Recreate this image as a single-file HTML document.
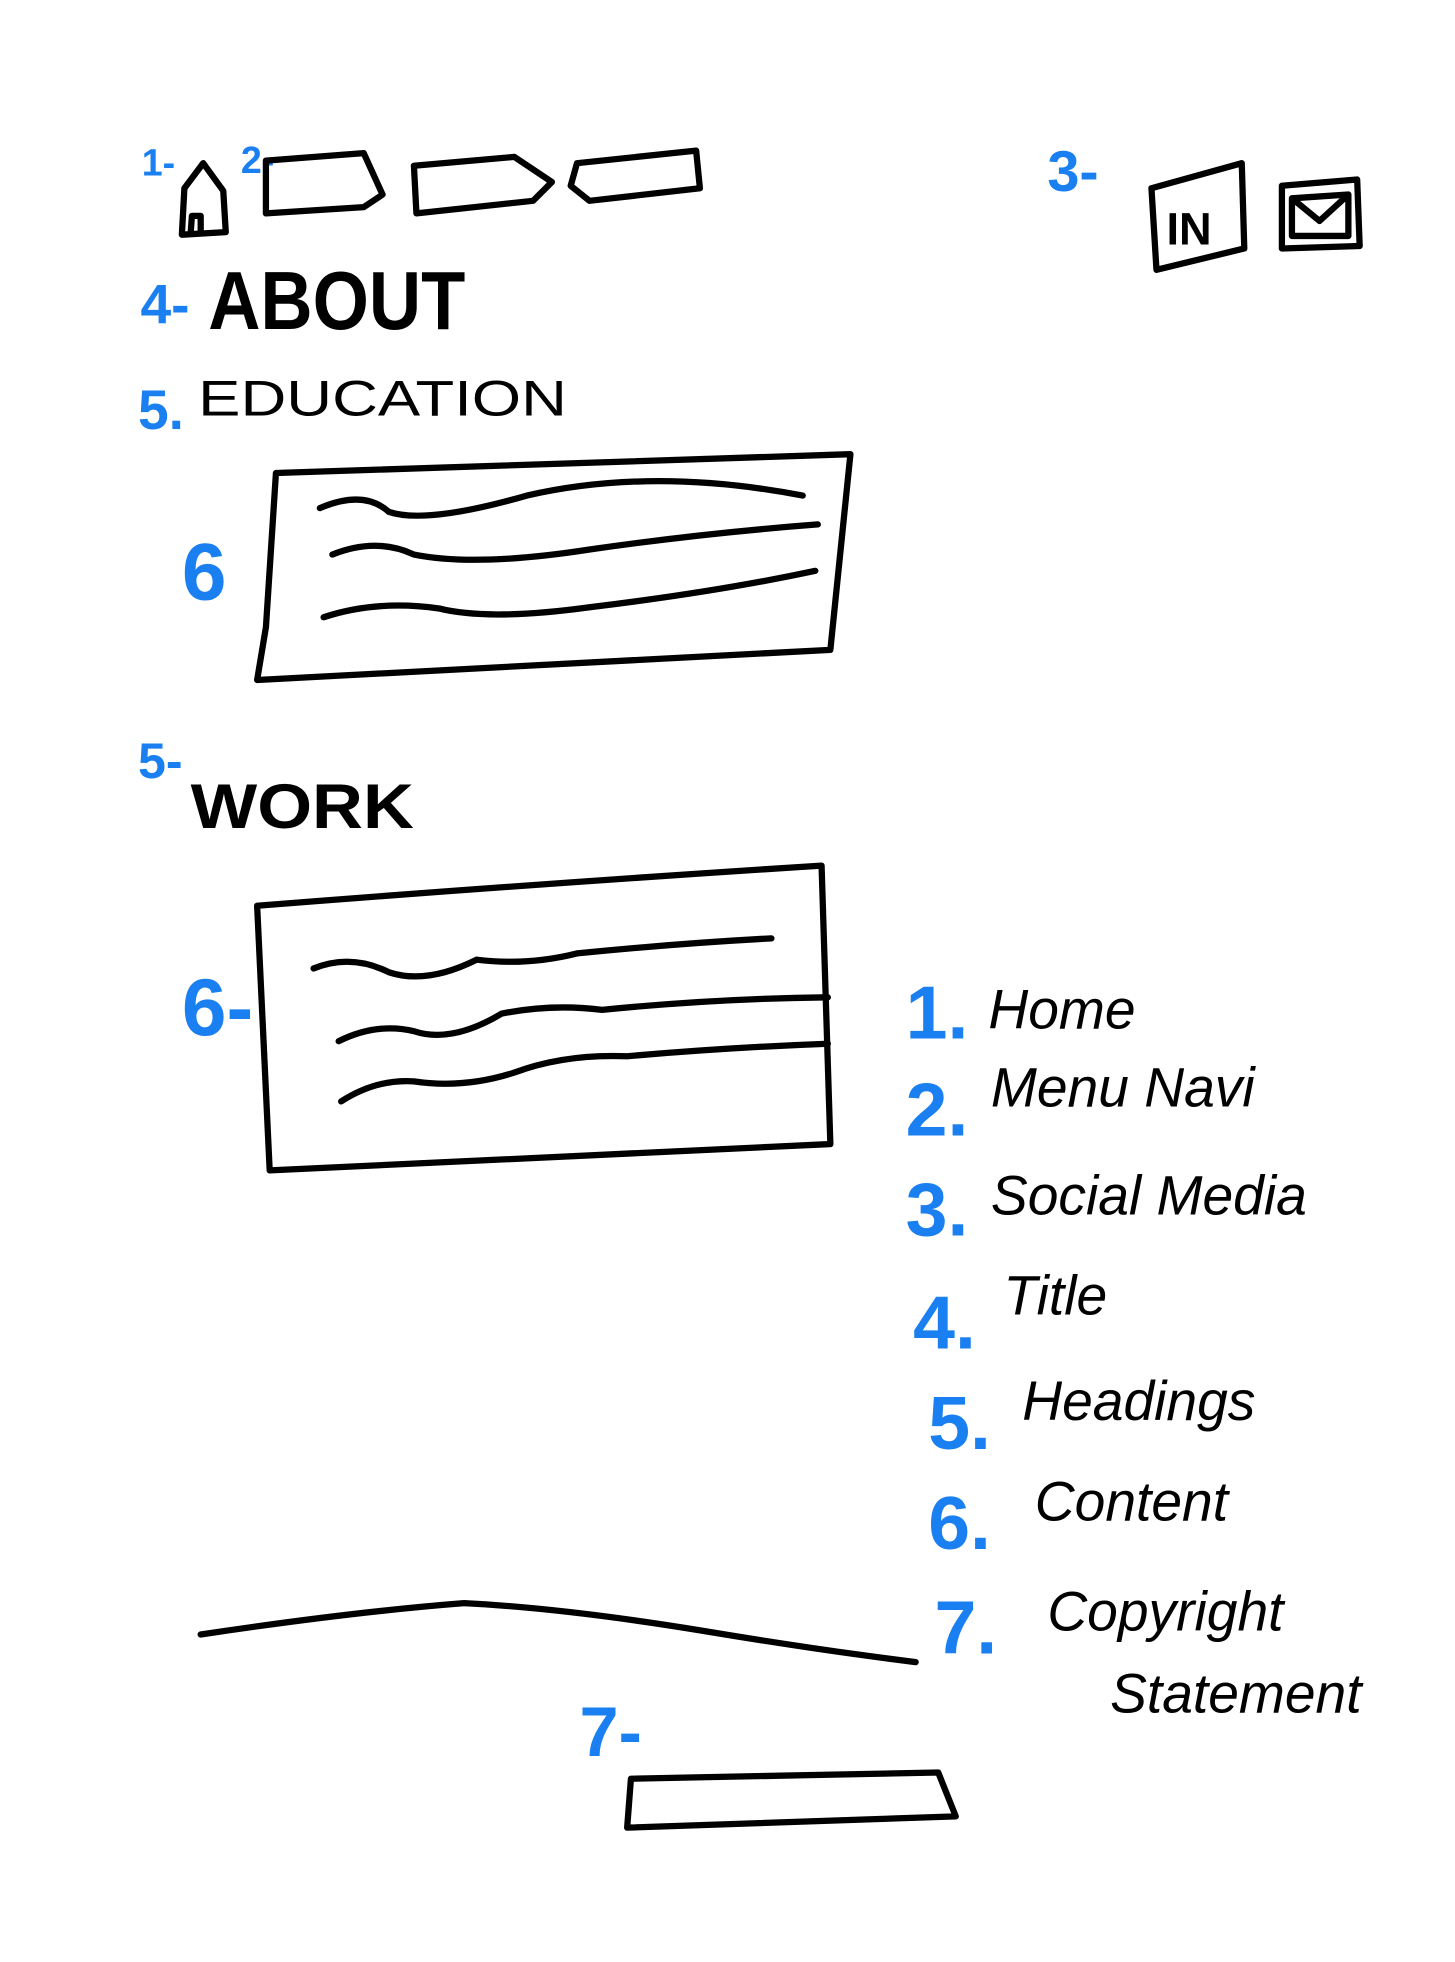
<!DOCTYPE html>
<html><head><meta charset="utf-8"><style>
html,body{margin:0;padding:0;background:#fff;}
svg{display:block}
.b{fill:#1a7ff0;font-family:"Liberation Sans",sans-serif;font-weight:bold}
.k{fill:#000;font-family:"Liberation Sans",sans-serif}
.s{fill:none;stroke:#000;stroke-width:5;stroke-linecap:round;stroke-linejoin:round}
</style></head><body>
<svg width="1455" height="1962" viewBox="0 0 1160 1564" xmlns="http://www.w3.org/2000/svg">
<rect width="1160" height="1564" fill="#fff"/>
<text class="b" x="113" y="140" font-size="30">1-</text>
<path class="s" d="M145 187 L147 150 L162 130 L178 152 L180 185 Z M152 186 L153 172 L160 172 L160 186"/>
<text class="b" x="192" y="138" font-size="30">2-</text>
<path class="s" d="M212 128 L290 122 L305 155 L290 165 L212 170 Z"/>
<path class="s" d="M330 132 L410 125 L440 145 L425 160 L332 170 Z"/>
<path class="s" d="M460 130 L555 120 L558 150 L470 160 L455 148 Z"/>
<text class="b" x="835" y="152" font-size="46">3-</text>
<path class="s" d="M918 150 L990 130 L992 198 L922 215 Z"/>
<text class="k" x="930" y="195" font-size="36" font-weight="bold">IN</text>
<path class="s" d="M1022 148 L1082 143 L1084 196 L1022 198 Z M1030 158 L1075 155 L1075 188 L1030 188 Z M1030 158 L1052 176 L1075 155"/>
<text class="b" x="112" y="258" font-size="44">4-</text>
<text class="k" x="166" y="262" font-size="66" font-weight="bold" textLength="205" lengthAdjust="spacingAndGlyphs">ABOUT</text>
<text class="b" x="110" y="342" font-size="44">5.</text>
<text class="k" x="158" y="331" font-size="40" textLength="294" lengthAdjust="spacingAndGlyphs">EDUCATION</text>
<path class="s" d="M220 377 L678 362 L662 518 L205 542 L212 500 Z"/>
<path class="s" d="M255 405 Q290 390 310 408 Q340 418 420 395 Q520 372 640 395"/>
<path class="s" d="M265 442 Q300 428 330 442 Q380 452 470 438 Q560 425 652 418"/>
<path class="s" d="M258 492 Q300 478 350 485 Q390 495 470 484 Q570 472 650 455"/>
<text class="b" x="145" y="478" font-size="64">6</text>
<text class="b" x="110" y="620" font-size="40">5-</text>
<text class="k" x="152" y="660" font-size="50" font-weight="bold" textLength="178" lengthAdjust="spacingAndGlyphs">WORK</text>
<path class="s" d="M205 722 Q420 705 655 690 L662 912 L215 933 Z"/>
<path class="s" d="M250 772 Q280 760 310 775 Q340 785 380 765 Q420 770 460 760 Q540 752 615 748"/>
<path class="s" d="M270 830 Q300 815 330 822 Q360 832 400 808 Q440 800 480 805 Q570 796 660 795"/>
<path class="s" d="M272 878 Q300 860 330 862 Q370 868 410 855 Q450 840 500 842 Q580 835 660 832"/>
<text class="b" x="145" y="825" font-size="64">6-</text>
<g class="b" font-size="60">
<text x="722" y="828">1.</text>
<text x="722" y="905">2.</text>
<text x="722" y="985">3.</text>
<text x="728" y="1075">4.</text>
<text x="740" y="1155">5.</text>
<text x="740" y="1235">6.</text>
<text x="745" y="1318">7.</text>
</g>
<g class="k" font-size="44" font-style="italic">
<text x="788" y="820">Home</text>
<text x="790" y="882">Menu Navi</text>
<text x="790" y="968">Social Media</text>
<text x="800" y="1048">Title</text>
<text x="815" y="1132">Headings</text>
<text x="825" y="1212">Content</text>
<text x="835" y="1300">Copyright</text>
<text x="885" y="1365">Statement</text>
</g>
<path class="s" d="M160 1303 Q280 1285 370 1278 Q450 1282 560 1300 Q650 1315 730 1325"/>
<text class="b" x="462" y="1400" font-size="56">7-</text>
<path class="s" d="M503 1418 L748 1413 L762 1448 L500 1457 Z"/>
</svg>
</body></html>
